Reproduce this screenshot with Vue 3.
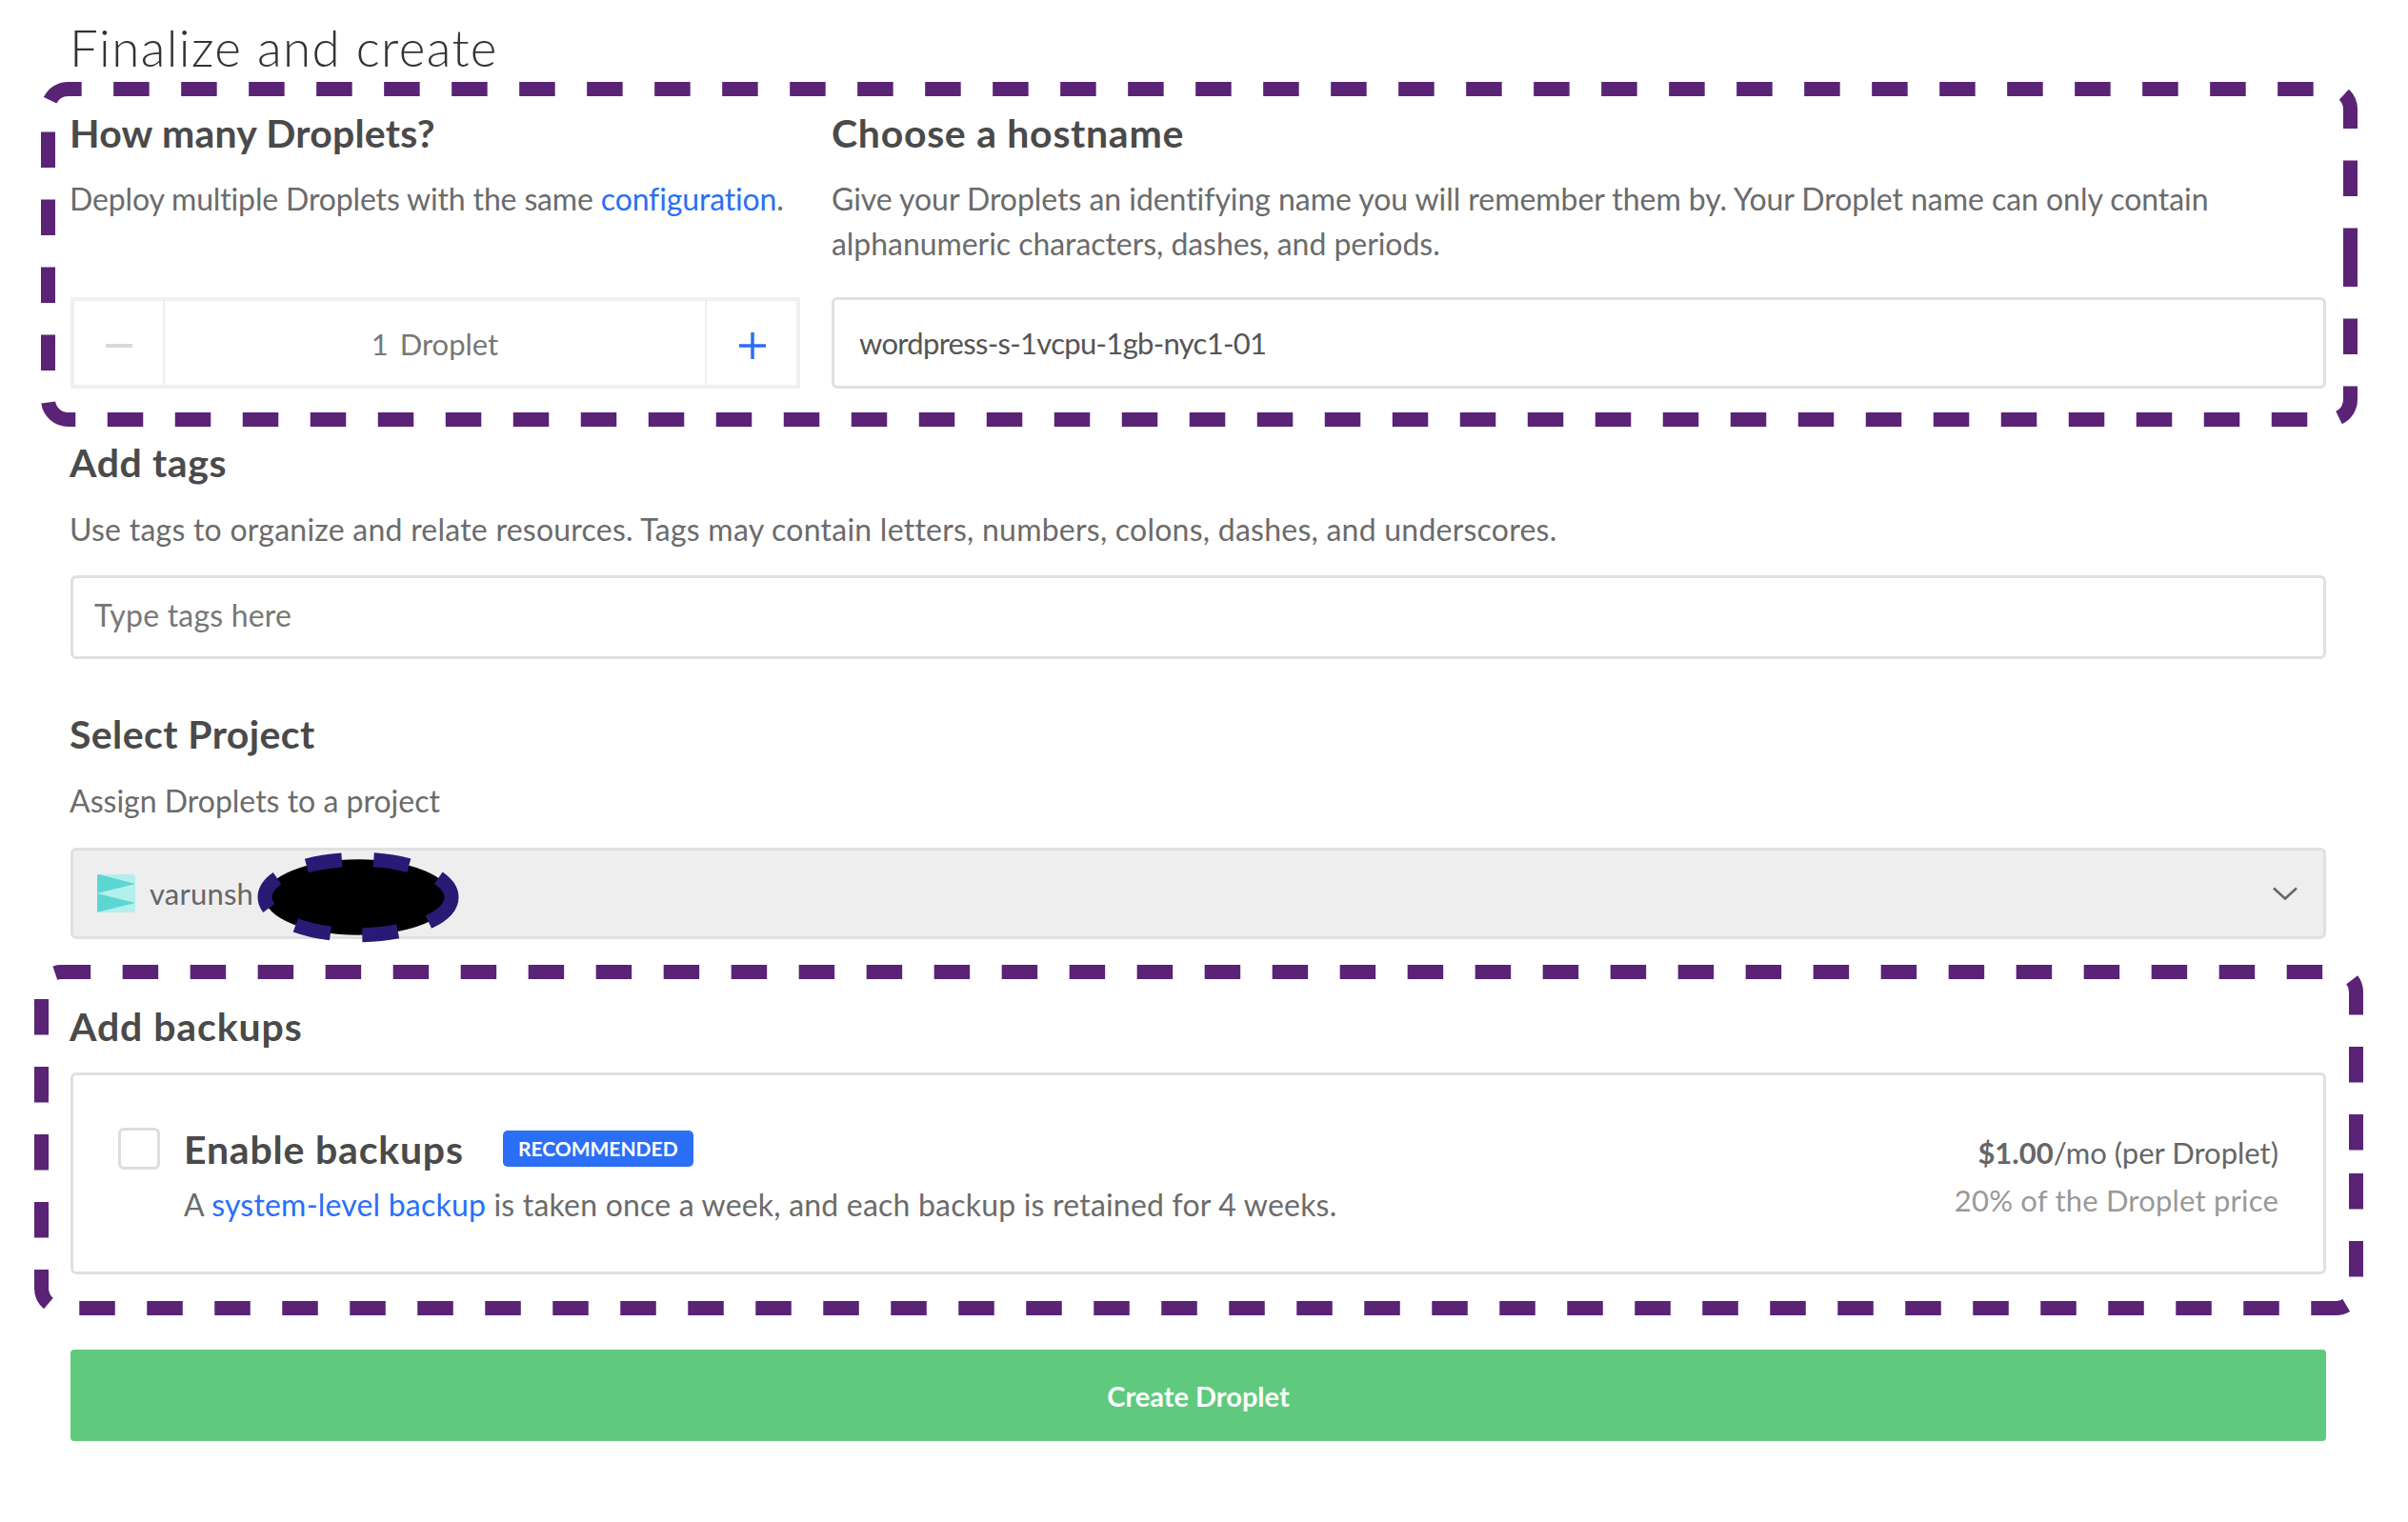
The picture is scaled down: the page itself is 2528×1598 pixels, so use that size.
<script setup>
const logoSize = 40
</script>

<template>
  <main class="page">
    <h1 class="title">Finalize and create</h1>

    <section class="row">
      <div class="col">
        <h3 class="head">How many Droplets?</h3>
        <p class="text text-tall text-tight">Deploy multiple Droplets with the same <a class="link">configuration</a>.</p>
        <div class="stepper">
          <button class="step">
            <span class="minus"></span>
          </button>
          <div class="count"><span class="count-num">1</span> Droplet</div>
          <button class="step step-plus">
            <svg width="30" height="30" viewBox="0 0 30 30"><path d="M15 1v28M1 15h28" stroke="#2e6ef5" stroke-width="3.5" fill="none" /></svg>
          </button>
        </div>
      </div>
      <div class="col">
        <h3 class="head head-wide">Choose a hostname</h3>
        <p class="text text-tall text-host">Give your Droplets an identifying name you will remember them by. Your Droplet name can only contain alphanumeric characters, dashes, and periods.</p>
        <div class="field host">wordpress-s-1vcpu-1gb-nyc1-01</div>
      </div>
    </section>

    <section class="block tags">
      <h3 class="head">Add tags</h3>
      <p class="text text-loose">Use tags to organize and relate resources. Tags may contain letters, numbers, colons, dashes, and underscores.</p>
      <div class="field tag-input">Type tags here</div>
    </section>

    <section class="block project">
      <h3 class="head">Select Project</h3>
      <p class="text">Assign Droplets to a project</p>
      <div class="field select">
        <svg class="logo" :width="logoSize" :height="logoSize" viewBox="0 0 40 40">
          <rect width="40" height="40" rx="3" fill="#b3f0ec" />
          <path d="M0 2Q0 0 2 0L40 10 0 20ZM0 20L40 30 0 40Z" fill="#5dd6d3" />
        </svg>
        <span class="select-name">varunsh</span>
        <svg class="chev" width="26" height="14" viewBox="0 0 26 14"><path d="M1 1.5L13 12.5 25 1.5" stroke="#666" stroke-width="2.6" fill="none" /></svg>
      </div>
    </section>

    <section class="block backups">
      <h3 class="head">Add backups</h3>
      <div class="card">
        <span class="check"></span>
        <div class="card-main">
          <div class="card-title">
            <span class="enable">Enable backups</span>
            <span class="badge">RECOMMENDED</span>
          </div>
          <p class="card-desc">A <a class="link">system-level backup</a> is taken once a week, and each backup is retained for 4 weeks.</p>
        </div>
        <div class="price">
          <div class="price-main"><strong>$1.00</strong>/mo (per Droplet)</div>
          <div class="price-sub">20% of the Droplet price</div>
        </div>
      </div>
    </section>

    <button class="create">Create Droplet</button>

    <svg class="marks" width="2528" height="1598" viewBox="0 0 2528 1598">
      <g fill="none" stroke="#5a2376" stroke-width="15" stroke-dasharray="37.5 33.5">
        <path d="M2467.5 263.5V419.5A21 21 0 0 1 2446.5 440.5H71.5A21 21 0 0 1 50.5 419.5V114.5A21 21 0 0 1 71.5 93.5H2446.5A21 21 0 0 1 2467.5 114.5Z" />
        <path d="M2473.5 1232V1352.5A21 21 0 0 1 2452.5 1373.5H64.5A21 21 0 0 1 43.5 1352.5V1041.5A21 21 0 0 1 64.5 1020.5H2452.5A21 21 0 0 1 2473.5 1041.5Z" />
      </g>
      <ellipse cx="376" cy="942" rx="98" ry="39.7" fill="#000" stroke="#2a1a75" stroke-width="15" stroke-dasharray="37.5 33.5" />
    </svg>
  </main>
</template>

<style scoped>
.page {
  position: relative;
  box-sizing: border-box;
  width: 2528px;
  height: 1598px;
  padding: 0 86px 0 73px;
  background: #fff;
  font-family: "Lato", "Open Sans", sans-serif;
  color: #444;
  overflow: hidden;
}
.title {
  margin: 0;
  padding-top: 22px;
  height: 80px;
  box-sizing: border-box;
  font-size: 53px;
  line-height: 56px;
  letter-spacing: 1.35px;
  font-weight: 300;
  color: #333;
}
.row {
  display: grid;
  grid-template-columns: 767px 1569px;
  column-gap: 33px;
  padding-top: 36px;
}
.col {
  display: flex;
  flex-direction: column;
}
.head {
  margin: 0;
  font-size: 41px;
  line-height: 48px;
  letter-spacing: 0.2px;
  font-weight: 700;
  color: #4a4a4a;
}
.head-wide {
  letter-spacing: 0.7px;
}
.tags .head {
  letter-spacing: 0.6px;
}
.project .head {
  letter-spacing: 0.4px;
}
.backups .head {
  letter-spacing: 0.9px;
}
.text {
  margin: 21px 0 0;
  font-size: 32px;
  line-height: 47px;
  color: #6b6b6b;
}
.text-tall {
  height: 94px;
  margin-bottom: 33px;
}
.text-tight {
  letter-spacing: -0.15px;
}
.text-host {
  letter-spacing: -0.05px;
}
.text-loose {
  letter-spacing: 0.24px;
}
.link {
  color: #2a6ff5;
}
.stepper {
  display: flex;
  height: 96px;
  margin-left: 1px;
  box-sizing: border-box;
  border: 4px solid #f0f0f0;
}
.step {
  flex: none;
  width: 93px;
  padding: 6px 0 0;
  border: 0;
  background: #fff;
  display: flex;
  align-items: center;
  justify-content: center;
}
.step-plus {
  width: 94px;
  padding-left: 2px;
}
.minus {
  width: 28px;
  height: 4px;
  background: #d9d9d9;
}
.count {
  flex: 1;
  border-left: 2px solid #f0f0f0;
  border-right: 2px solid #f0f0f0;
  text-align: center;
  font-size: 31px;
  line-height: 90px;
  color: #777;
}
.count-num {
  margin-right: 4px;
}
.field {
  box-sizing: border-box;
  border: 3px solid #e0e0e0;
  border-radius: 6px;
  display: flex;
  align-items: center;
}
.host {
  height: 96px;
  padding-left: 26px;
  font-size: 31px;
  letter-spacing: -0.7px;
  color: #555;
}
.tags {
  padding-top: 54px;
}
.block .text {
  margin-top: 22px;
}
.block .field {
  margin-left: 1px;
}
.tag-input {
  height: 88px;
  margin-top: 25px;
  padding: 0 0 5px 22px;
  font-size: 32px;
  letter-spacing: 0.2px;
  color: #777;
}
.project {
  padding-top: 55px;
}
.select {
  position: relative;
  height: 96px;
  margin-top: 26px;
  padding-left: 25px;
  background: #eee;
  font-size: 31px;
  letter-spacing: 0.2px;
  color: #666;
}
.select-name {
  margin-left: 15px;
}
.chev {
  margin-left: auto;
  margin-right: 27px;
}
.backups {
  padding-top: 68px;
}
.card {
  display: flex;
  align-items: flex-start;
  height: 212px;
  margin: 24px 0 0 1px;
  box-sizing: border-box;
  border: 3px solid #e0e0e0;
  border-radius: 6px;
  padding: 55px 47px 0 47px;
}
.check {
  flex: none;
  box-sizing: border-box;
  width: 44px;
  height: 44px;
  border: 3px solid #ddd;
  border-radius: 6px;
}
.card-main {
  flex: 1;
  margin-left: 25px;
}
.card-title {
  display: flex;
  align-items: center;
  height: 44px;
}
.enable {
  font-size: 41px;
  letter-spacing: 0.8px;
  font-weight: 700;
  color: #4a4a4a;
}
.badge {
  margin-left: 41px;
  width: 200px;
  height: 38px;
  border-radius: 5px;
  background: #2a6ff5;
  color: #fff;
  font-size: 21px;
  font-weight: 700;
  line-height: 38px;
  text-align: center;
}
.card-desc {
  margin: 13px 0 0;
  font-size: 32px;
  letter-spacing: 0.2px;
  line-height: 47px;
  color: #6b6b6b;
}
.price {
  text-align: right;
  padding-top: 1px;
  font-size: 31px;
  line-height: 50px;
}
.price-main {
  color: #666;
}
.price-main strong {
  font-weight: 700;
}
.price-sub {
  color: #999;
  letter-spacing: 0.2px;
}
.create {
  display: block;
  width: 2368px;
  height: 96px;
  margin: 79px 0 0 1px;
  padding: 0;
  border: 0;
  border-radius: 4px;
  background: #5fca7d;
  color: #fff;
  font-family: inherit;
  font-size: 29px;
  font-weight: 700;
  text-align: center;
}
.marks {
  position: absolute;
  left: 0;
  top: 0;
  pointer-events: none;
}
</style>
